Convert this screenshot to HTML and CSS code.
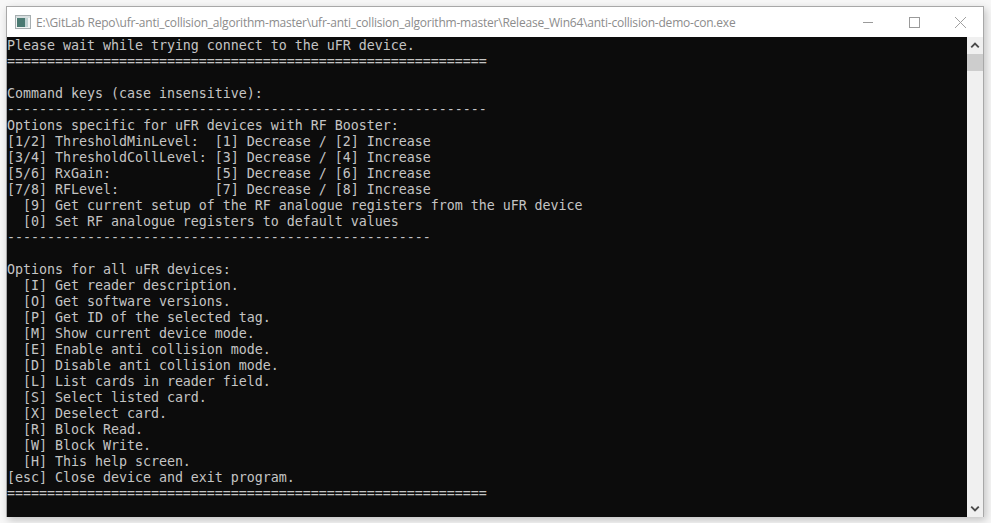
FILE: index.html
```html
<!DOCTYPE html>
<html lang="en">
<head>
<meta charset="utf-8">
<title>anti-collision-demo-con</title>
<link rel="stylesheet" href="styles.css">
</head>
<body>
<div class="window">
  <header class="titlebar">
    <svg class="app-icon" width="16" height="16" viewBox="0 0 16 16">
      <rect x="0.5" y="1.5" width="15" height="13" fill="#f2f4f3" stroke="#a6aeb0"/>
      <rect x="1" y="2" width="14" height="2" fill="#d8dfe0"/>
      <rect x="2" y="4" width="8" height="9" fill="#4a7a72"/>
      <rect x="10" y="4" width="3" height="9" fill="#c0d2d2"/>
    </svg>
    <span class="title">E:\GitLab Repo\ufr-anti_collision_algorithm-master\ufr-anti_collision_algorithm-master\Release_Win64\anti-collision-demo-con.exe</span>
    <div class="controls">
      <svg class="control" width="46" height="30" viewBox="0 0 46 30"><path d="M18 15.5h10" stroke="#9a9a9a" fill="none"/></svg>
      <svg class="control" width="46" height="30" viewBox="0 0 46 30"><rect x="18.5" y="10.5" width="10" height="10" stroke="#9a9a9a" fill="none"/></svg>
      <svg class="control" width="46" height="30" viewBox="0 0 46 30"><path d="M18 10l11 11M29 10l-11 11" stroke="#a0a0a0" fill="none"/></svg>
    </div>
  </header>
  <main class="body">
    <pre class="console">Please wait while trying connect to the uFR device.
============================================================

Command keys (case insensitive):
------------------------------------------------------------
Options specific for uFR devices with RF Booster:
[1/2] ThresholdMinLevel:  [1] Decrease / [2] Increase
[3/4] ThresholdCollLevel: [3] Decrease / [4] Increase
[5/6] RxGain:             [5] Decrease / [6] Increase
[7/8] RFLevel:            [7] Decrease / [8] Increase
  [9] Get current setup of the RF analogue registers from the uFR device
  [0] Set RF analogue registers to default values
-----------------------------------------------------

Options for all uFR devices:
  [I] Get reader description.
  [O] Get software versions.
  [P] Get ID of the selected tag.
  [M] Show current device mode.
  [E] Enable anti collision mode.
  [D] Disable anti collision mode.
  [L] List cards in reader field.
  [S] Select listed card.
  [X] Deselect card.
  [R] Block Read.
  [W] Block Write.
  [H] This help screen.
[esc] Close device and exit program.
============================================================</pre>
    <div class="scrollbar">
      <svg class="arrow" width="17" height="17" viewBox="0 0 17 17"><path d="M4.5 10.5l4-4 4 4" stroke="#4a4a4a" stroke-width="2" fill="none"/></svg>
      <div class="thumb"></div>
      <div class="track"></div>
      <svg class="arrow" width="17" height="17" viewBox="0 0 17 17"><path d="M4.5 6.5l4 4 4-4" stroke="#4a4a4a" stroke-width="2" fill="none"/></svg>
    </div>
  </main>
</div>
</body>
</html>
```
FILE: styles.css
```css
html, body {
  margin: 0;
  height: 100%;
  overflow: hidden;
  background: #f7f7f7;
}
.window {
  box-sizing: border-box;
  width: 978px;
  height: 511px;
  margin: 6px 0 0 6px;
  border: 1px solid #a8a8a8;
  border-bottom: 0;
  background: #fff;
  box-shadow: 2px 3px 8px rgba(0, 0, 0, 0.22);
  display: flex;
  flex-direction: column;
}
.titlebar {
  height: 30px;
  flex: none;
  display: flex;
  align-items: center;
  padding-left: 8px;
  background: #fff;
}
.app-icon { flex: none; margin-right: 5px; }
.title {
  font: 12px "Open Sans", "Noto Sans", sans-serif;
  color: #8c8c8c;
  white-space: nowrap;
  letter-spacing: -0.215px;
}
.controls { margin-left: auto; display: flex; flex: none; }
.control { display: block; }
.body {
  flex: 1;
  min-height: 0;
  display: flex;
}
.console {
  flex: 1;
  margin: 0;
  padding-top: 1px;
  background: #0c0c0c;
  color: #c4c4c4;
  font: 13.33px/16px "DejaVu Sans Mono", "Liberation Mono", monospace;
  letter-spacing: -0.03px;
  white-space: pre;
  overflow: hidden;
}
.scrollbar {
  width: 16px;
  flex: none;
  background: #f0f0f0;
  display: flex;
  flex-direction: column;
}
.arrow { flex: none; width: 16px; height: 17px; display: block; }
.thumb { height: 17px; flex: none; background: #cdcdcd; }
.track { flex: 1; }
```
